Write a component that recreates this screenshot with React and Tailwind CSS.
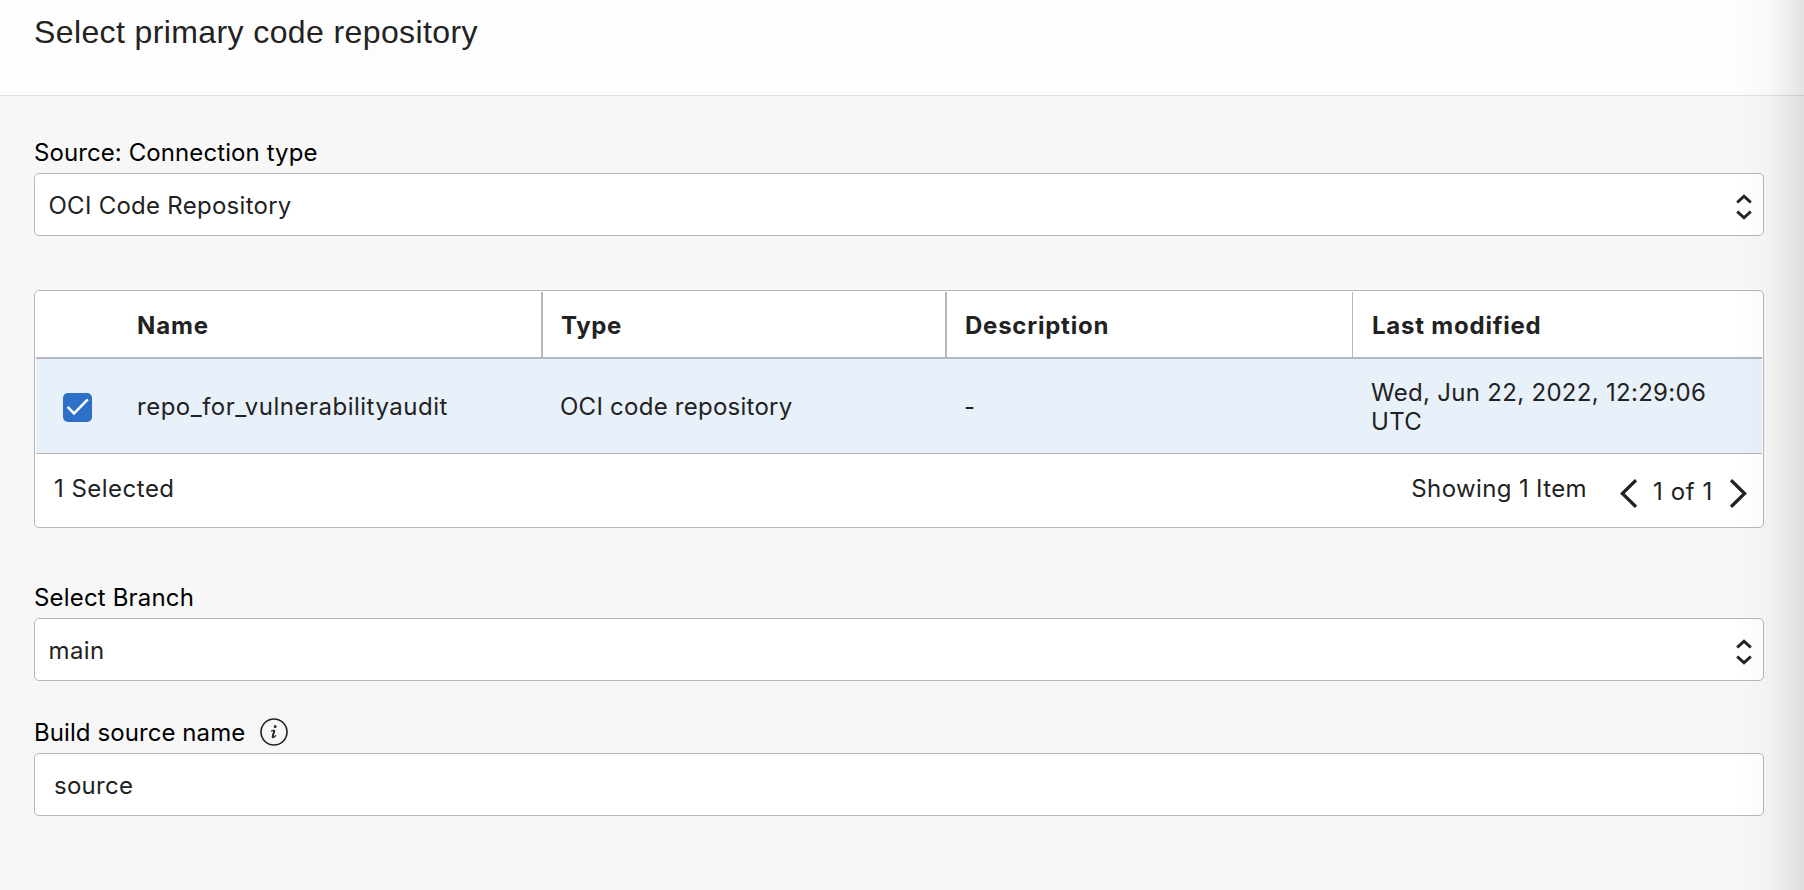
import React from "react";

const columns = [
  { label: "Type", className: "w-[404px] border-r-2 pl-[18px] tracking-[0.63px]" },
  { label: "Description", className: "w-[406px] border-r pl-[18px] tracking-[0.76px]" },
  { label: "Last modified", className: "w-[409px] pl-[19px] tracking-[0.78px]" },
];

function SortChevrons() {
  return (
    <svg className="mt-[3px] h-[28px] w-[16px]" viewBox="0 0 16 28" fill="none" stroke="#222" strokeWidth="3">
      <path d="M1.2 9.5 8 3.2l6.8 6.3" />
      <path d="M1.2 18.5 8 24.8l6.8-6.3" />
    </svg>
  );
}

function Select({ value, className }) {
  return (
    <div className="flex h-[63px] items-center justify-between rounded-[5px] border border-[#b3b8be] bg-white pt-px pr-[11px] pl-[13.5px]">
      <span className={className}>{value}</span>
      <SortChevrons />
    </div>
  );
}

function InfoIcon() {
  return (
    <svg className="h-[28px] w-[28px]" viewBox="0 0 28 28" fill="none">
      <circle cx="14" cy="14" r="13" stroke="#222" strokeWidth="1.6" />
      <circle cx="15.2" cy="8.7" r="1.4" fill="#222" />
      <path d="M11 13.3c.9-.7 1.6-1 2.6-.9M14.6 11.8l-2 6.8c-.2 1 .2 1.2 1 .8.8-.4 1.7-1.1 2.4-2" stroke="#222" strokeWidth="1.1" />
      <path d="M14.4 12.2l-1.9 7" stroke="#222" strokeWidth="1.9" />
    </svg>
  );
}

export default function App() {
  return (
    <div className="relative flex h-[890px] w-[1804px] flex-col overflow-hidden bg-[#f7f7f7] font-['Inter',sans-serif] text-[24px] leading-[29px] text-[#222]">
      <header className="h-[96px] shrink-0 border-b border-[#dfdfdf] bg-[#fdfdfd] pt-[12px] pl-[34px]">
        <h1 className="font-['Liberation_Sans',sans-serif] text-[32px] leading-[40px] tracking-[0.39px]">
          Select primary code repository
        </h1>
      </header>

      <main className="flex flex-col pt-[42px] pr-[40px] pl-[34px]">
        <label className="mb-[6px] tracking-[0.09px] text-black">Source: Connection type</label>
        <Select value="OCI Code Repository" className="tracking-[0.27px]" />

        <section className="mt-[54px] flex h-[238px] flex-col rounded-[5px] border border-[#b3b8be] bg-white p-px">
          <div className="flex h-[67px] border-b-2 border-[#b3b8be] font-bold">
            <div className="flex w-[507px] items-center border-r-2 border-[#b3b8be] pt-[2px] pl-[101px] tracking-[0.9px]">Name</div>
            {columns.map((c) => (
              <div key={c.label} className={`flex items-center border-[#b3b8be] pt-[2px] ${c.className}`}>
                {c.label}
              </div>
            ))}
          </div>
          <div className="flex h-[95px] items-center border-b border-[#b3b8be] bg-[#e8f0fa] pt-px">
            <div className="flex w-[507px] items-center pl-[27px]">
              <span className="mt-[2px] mr-[45px] flex h-[29px] w-[29px] items-center justify-center rounded-[5px] bg-[#2c70c8]">
                <svg className="h-[29px] w-[29px]" viewBox="0 0 29 29" fill="none" stroke="#fff" strokeWidth="2.5">
                  <path d="M4.6 13.8 11 20.4 24.8 6.4" />
                </svg>
              </span>
              <span className="tracking-[0.5px]">repo_for_vulnerabilityaudit</span>
            </div>
            <div className="w-[404px] pl-[17px] tracking-[0.25px]">OCI code repository</div>
            <div className="w-[406px] pl-[17px]">-</div>
            <div className="w-[409px] pt-px pr-[18px] pl-[18px] tracking-[0.3px]">Wed, Jun 22, 2022, 12:29:06 UTC</div>
          </div>
          <div className="flex flex-1 items-start justify-between pr-[15px] pl-[18px]">
            <span className="pt-[20px] tracking-[0.48px]">1 Selected</span>
            <div className="flex items-start">
              <span className="mr-[33px] pt-[20px] tracking-[0.36px]">Showing 1 Item</span>
              <svg className="mt-[25px] h-[29px] w-[17px]" viewBox="0 0 17 29" fill="none" stroke="#222" strokeWidth="3.3">
                <path d="M16 1.2 2.4 14.5 16 27.8" />
              </svg>
              <span className="w-[93px] pt-[23px] pl-[16px] tracking-[0.6px]">1 of 1</span>
              <svg className="mt-[25px] h-[29px] w-[17px]" viewBox="0 0 17 29" fill="none" stroke="#222" strokeWidth="3.3">
                <path d="M1 1.2l13.6 13.3L1 27.8" />
              </svg>
            </div>
          </div>
        </section>

        <label className="mt-[55px] mb-[6px] tracking-[0.17px] text-black">Select Branch</label>
        <Select value="main" className="tracking-[0.4px]" />

        <div className="mt-[37px] mb-[6px] flex h-[29px] items-start text-black">
          <label className="mr-[15px] tracking-[0.08px]">Build source name</label>
          <InfoIcon />
        </div>
        <div className="flex h-[63px] items-center rounded-[5px] border border-[#b3b8be] bg-white pt-px pl-[19px] tracking-[0.28px]">
          source
        </div>
      </main>

      <div className="pointer-events-none absolute inset-y-0 right-0 w-[70px] bg-[linear-gradient(to_right,rgba(0,0,0,0)_0%,rgba(0,0,0,0.01)_30%,rgba(0,0,0,0.026)_55%,rgba(0,0,0,0.06)_77%,rgba(0,0,0,0.107)_100%)]" />
    </div>
  );
}
